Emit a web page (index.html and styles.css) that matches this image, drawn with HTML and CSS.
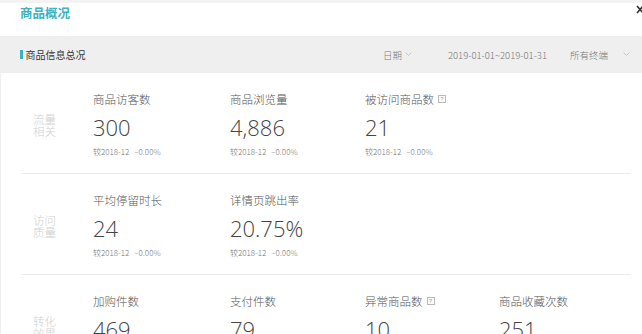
FILE: index.html
```html
<!DOCTYPE html>
<html lang="zh-CN">
<head>
<meta charset="utf-8">
<title>商品概况</title>
<link rel="stylesheet" href="styles.css">
</head>
<body>
<div class="page">
  <div class="header">
    <div class="title">商品概况</div>
    <svg class="close" width="8" height="9" viewBox="0 0 8 9"><path d="M1 1 L7 8 M7 1 L1 8" stroke="#333" stroke-width="1.6"/></svg>
  </div>
  <div class="band">
    <div class="band-title"><span class="bar"></span>商品信息总况</div>
    <div class="filters">
      <div class="filter date-label">日期<svg class="chev" width="7" height="5" viewBox="0 0 7 5"><path d="M0.5 0.5 L3.5 3.5 L6.5 0.5" fill="none" stroke="#c8c8c8" stroke-width="1"/></svg></div>
      <div class="filter range">2019-01-01~2019-01-31</div>
      <div class="filter terminal">所有终端</div>
      <svg class="chev end" width="7" height="5" viewBox="0 0 7 5"><path d="M0.5 0.5 L3.5 3.5 L6.5 0.5" fill="none" stroke="#c8c8c8" stroke-width="1"/></svg>
    </div>
  </div>
  <div class="content">
    <div class="row">
      <div class="cat"><span>流量</span><span>相关</span></div>
      <div class="metric">
        <div class="m-title">商品访客数</div>
        <div class="m-value">300</div>
        <div class="m-cmp"><span>较2018-12</span><span>–0.00%</span></div>
      </div>
      <div class="metric">
        <div class="m-title">商品浏览量</div>
        <div class="m-value">4,886</div>
        <div class="m-cmp"><span>较2018-12</span><span>–0.00%</span></div>
      </div>
      <div class="metric">
        <div class="m-title">被访问商品数<span class="q">?</span></div>
        <div class="m-value">21</div>
        <div class="m-cmp"><span>较2018-12</span><span>–0.00%</span></div>
      </div>
    </div>
    <div class="row">
      <div class="cat"><span>访问</span><span>质量</span></div>
      <div class="metric">
        <div class="m-title">平均停留时长</div>
        <div class="m-value">24</div>
        <div class="m-cmp"><span>较2018-12</span><span>–0.00%</span></div>
      </div>
      <div class="metric">
        <div class="m-title">详情页跳出率</div>
        <div class="m-value">20.75%</div>
        <div class="m-cmp"><span>较2018-12</span><span>–0.00%</span></div>
      </div>
    </div>
    <div class="row">
      <div class="cat"><span>转化</span><span>效果</span></div>
      <div class="metric">
        <div class="m-title">加购件数</div>
        <div class="m-value">469</div>
        <div class="m-cmp"><span>较2018-12</span><span>–0.00%</span></div>
      </div>
      <div class="metric">
        <div class="m-title">支付件数</div>
        <div class="m-value">79</div>
        <div class="m-cmp"><span>较2018-12</span><span>–0.00%</span></div>
      </div>
      <div class="metric">
        <div class="m-title">异常商品数<span class="q">?</span></div>
        <div class="m-value">10</div>
        <div class="m-cmp"><span>较2018-12</span><span>–0.00%</span></div>
      </div>
      <div class="metric">
        <div class="m-title">商品收藏次数</div>
        <div class="m-value">251</div>
        <div class="m-cmp"><span>较2018-12</span><span>–0.00%</span></div>
      </div>
    </div>
  </div>
</div>
</body>
</html>
```
FILE: styles.css
```css
html, body {
  margin: 0;
  padding: 0;
}
body {
  background: #f3f3f3;
  font-family: "Noto Sans CJK SC", "Noto Sans", sans-serif;
  color: #555;
  overflow: hidden;
  height: 334px;
}
.page {
  padding-top: 3px;
}
.header {
  position: relative;
  height: 33px;
  background: #fff;
  padding-left: 20px;
}
.title {
  font-size: 12.5px;
  line-height: 20px;
  font-weight: bold;
  color: #3cb1c0;
}
.close {
  position: absolute;
  top: 2px;
  right: -2px;
}
.band {
  height: 37px;
  background: #efefef;
  display: flex;
  align-items: center;
  padding: 0 12px 0 20px;
}
.band-title {
  display: flex;
  align-items: center;
  font-size: 10px;
  color: #333;
}
.bar {
  width: 2.5px;
  height: 9px;
  background: #3cb1c0;
  margin-right: 3px;
}
.filters {
  margin-left: auto;
  display: flex;
  align-items: center;
  font-size: 9.5px;
  color: #777;
  font-weight: 300;
}
.filter {
  display: flex;
  align-items: center;
}
.date-label .chev {
  margin-left: 3px;
}
.range {
  margin-left: 36px;
}
.terminal {
  margin-left: 23px;
}
.chev.end {
  margin-left: 15px;
}
.content {
  background: #fff;
  height: 300px;
  border-left: 1px solid #f0f0f0;
}
.row {
  display: grid;
  grid-template-columns: 72px 137px 135px 134px 134px;
  align-items: center;
  margin: 0 11px 0 20px;
  padding: 18px 0 15px;
  border-bottom: 1px solid #ececec;
  height: 67px;
}
.cat {
  display: flex;
  flex-direction: column;
  padding-left: 12px;
  font-size: 11.5px;
  line-height: 12px;
  color: #d0d0d0;
  font-weight: 300;
}
.metric {
  display: flex;
  flex-direction: column;
}
.m-title {
  display: flex;
  align-items: center;
  font-size: 11.5px;
  line-height: 16px;
  color: #555;
  font-weight: 300;
}
.q {
  display: inline-flex;
  align-items: center;
  justify-content: center;
  box-sizing: border-box;
  width: 8px;
  height: 8px;
  border: 1px solid #bbb;
  font-size: 6px;
  line-height: 6px;
  color: #999;
  margin-left: 4px;
  font-weight: normal;
  font-family: "Liberation Sans", sans-serif;
}
.m-value {
  margin-top: 6px;
  font-family: "Open Sans", "Noto Sans", sans-serif;
  font-weight: 300;
  font-size: 22px;
  line-height: 28px;
  color: #444;
}
.m-cmp {
  margin-top: 5px;
  display: flex;
  gap: 5px;
  font-size: 8px;
  line-height: 12px;
  color: #777;
  font-weight: 300;
}
```
